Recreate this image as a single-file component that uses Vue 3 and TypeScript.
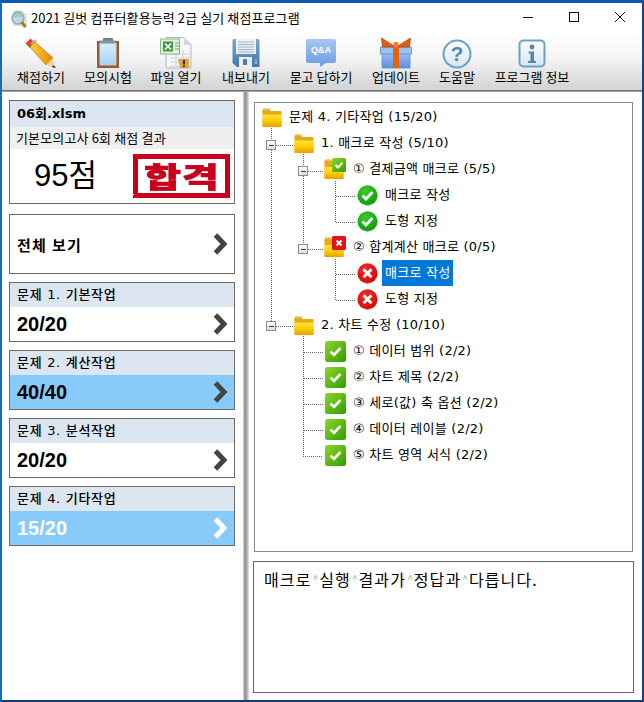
<script setup lang="ts">
interface Tool { label: string; icon: string; w: number }
interface Row { id: number; text: string; icon: string; indent: string; selected?: boolean }
interface Section { title: string; score: string; active?: boolean; light?: boolean }

const tools: Tool[] = [
  { label: '채점하기', icon: 'pencil', w: 68 },
  { label: '모의시험', icon: 'clip', w: 66 },
  { label: '파일 열기', icon: 'excel', w: 70 },
  { label: '내보내기', icon: 'floppy', w: 70 },
  { label: '묻고 답하기', icon: 'qa', w: 80 },
  { label: '업데이트', icon: 'gift', w: 70 },
  { label: '도움말', icon: 'help', w: 52 },
  { label: '프로그램 정보', icon: 'info', w: 98 },
]

const sections: Section[] = [
  { title: '문제 1. 기본작업', score: '20/20' },
  { title: '문제 2. 계산작업', score: '40/40', active: true },
  { title: '문제 3. 분석작업', score: '20/20' },
  { title: '문제 4. 기타작업', score: '15/20', active: true, light: true },
]

const rows: Row[] = [
  { id: 0, text: '문제 4. 기타작업 (15/20)', icon: 'folder', indent: 'l0' },
  { id: 1, text: '1. 매크로 작성 (5/10)', icon: 'folder', indent: 'l1' },
  { id: 2, text: '① 결제금액 매크로 (5/5)', icon: 'folder-ok', indent: 'l2' },
  { id: 3, text: '매크로 작성', icon: 'ok', indent: 'l3' },
  { id: 4, text: '도형 지정', icon: 'ok', indent: 'l3' },
  { id: 5, text: '② 합계계산 매크로 (0/5)', icon: 'folder-err', indent: 'l2' },
  { id: 6, text: '매크로 작성', icon: 'err', indent: 'l3', selected: true },
  { id: 7, text: '도형 지정', icon: 'err', indent: 'l3' },
  { id: 8, text: '2. 차트 수정 (10/10)', icon: 'folder', indent: 'l1' },
  { id: 9, text: '① 데이터 범위 (2/2)', icon: 'square', indent: 'l2b' },
  { id: 10, text: '② 차트 제목 (2/2)', icon: 'square', indent: 'l2b' },
  { id: 11, text: '③ 세로(값) 축 옵션 (2/2)', icon: 'square', indent: 'l2b' },
  { id: 12, text: '④ 데이터 레이블 (2/2)', icon: 'square', indent: 'l2b' },
  { id: 13, text: '⑤ 차트 영역 서식 (2/2)', icon: 'square', indent: 'l2b' },
]

const expanders: [number, number][] = [[271, 145], [303, 171], [303, 249], [271, 326]]
const lines: string[] = [
  'M271.5 128V326', 'M276 145.5H293',
  'M303.5 154V249', 'M308 171.5H323', 'M308 249.5H323',
  'M335.5 181V222.5H356', 'M336 196.5H356',
  'M335.5 259V300.5H356', 'M336 274.5H356',
  'M276 326.5H293',
  'M303.5 336V456.5H323', 'M304 352.5H323', 'M304 378.5H323', 'M304 404.5H323', 'M304 430.5H323',
]
const messageParts: string[] = ['매크로', '실행', '결과가', '정답과', '다릅니다.']
</script>

<template>
  <div class="window">
    <svg class="defs" width="0" height="0" aria-hidden="true">
      <defs>
        <linearGradient id="gFolder" x1="0" y1="0" x2="0" y2="1">
          <stop offset="0" stop-color="#ffe63a" />
          <stop offset="0.5" stop-color="#ffcf00" />
          <stop offset="1" stop-color="#e89e00" />
        </linearGradient>
        <linearGradient id="gFolderBack" x1="0" y1="0" x2="0" y2="1">
          <stop offset="0" stop-color="#fbd98a" />
          <stop offset="1" stop-color="#d48c10" />
        </linearGradient>
        <linearGradient id="gSquare" x1="0" y1="0" x2="1" y2="1">
          <stop offset="0" stop-color="#8fd62a" />
          <stop offset="1" stop-color="#2f9e00" />
        </linearGradient>
        <radialGradient id="gOk" cx="0.4" cy="0.3" r="0.8">
          <stop offset="0" stop-color="#3ccb2e" />
          <stop offset="1" stop-color="#049a04" />
        </radialGradient>
        <radialGradient id="gErr" cx="0.4" cy="0.3" r="0.8">
          <stop offset="0" stop-color="#f22a2a" />
          <stop offset="1" stop-color="#dc0000" />
        </radialGradient>
        <linearGradient id="gExp" x1="0" y1="0" x2="0" y2="1">
          <stop offset="0" stop-color="#ffffff" />
          <stop offset="1" stop-color="#d8dce4" />
        </linearGradient>
        <linearGradient id="gPencil" x1="0" y1="0" x2="1" y2="0">
          <stop offset="0" stop-color="#ffd23a" />
          <stop offset="1" stop-color="#e88a00" />
        </linearGradient>
        <linearGradient id="gPaper" x1="0" y1="0" x2="0" y2="1">
          <stop offset="0" stop-color="#d8ecfa" />
          <stop offset="1" stop-color="#a8d2f2" />
        </linearGradient>
        <linearGradient id="gFloppy" x1="0" y1="0" x2="0" y2="1">
          <stop offset="0" stop-color="#7fa8cc" />
          <stop offset="1" stop-color="#3f78ac" />
        </linearGradient>
        <linearGradient id="gQa" x1="0" y1="0" x2="0" y2="1">
          <stop offset="0" stop-color="#a8c8f4" />
          <stop offset="1" stop-color="#6a9be0" />
        </linearGradient>
        <linearGradient id="gGift" x1="0" y1="0" x2="0" y2="1">
          <stop offset="0" stop-color="#a4c8f4" />
          <stop offset="1" stop-color="#5a8edc" />
        </linearGradient>
        <linearGradient id="gHelp" x1="0" y1="0" x2="0" y2="1">
          <stop offset="0" stop-color="#ffffff" />
          <stop offset="1" stop-color="#d4e6f4" />
        </linearGradient>
        <filter id="rough" x="0" y="0" width="100%" height="100%">
          <feTurbulence type="fractalNoise" baseFrequency="0.55" numOctaves="2" seed="4" result="n" />
          <feDisplacementMap in="SourceGraphic" in2="n" scale="1.6" />
        </filter>
      </defs>
    </svg>

    <header class="titlebar">
      <svg class="app-icon" width="18" height="18" viewBox="0 0 18 18">
        <path d="M4 1h8l4 4v10H4z" fill="#eef2ea" stroke="#c8ccc4" />
        <circle cx="8" cy="8" r="6" fill="#bcd8ec" stroke="#8ea4b4" stroke-width="1.4" />
        <path d="M3 7a5 4 0 0 1 10 0z" fill="#9ec89a" opacity="0.7" />
        <path d="M11.5 12l4 5" stroke="#b07a24" stroke-width="3" />
      </svg>
      <span class="title-text">2021 길벗 컴퓨터활용능력 2급 실기 채점프로그램</span>
      <div class="controls">
        <svg width="46" height="30" viewBox="0 0 46 30"><path d="M18 14.5H28" stroke="#111" /></svg>
        <svg width="46" height="30" viewBox="0 0 46 30"><rect x="18.5" y="9.5" width="9" height="9" fill="none" stroke="#111" /></svg>
        <svg width="46" height="30" viewBox="0 0 46 30"><path d="M18 9L28 19M28 9L18 19" stroke="#111" /></svg>
      </div>
    </header>

    <nav class="toolbar">
      <div v-for="t in tools" :key="t.label" class="tool" :style="{ width: t.w + 'px' }">
        <svg width="32" height="32" viewBox="0 0 32 32">
          <g v-if="t.icon === 'pencil'">
            <path d="M5.5 1.5L0.5 6.5L5 11L10 6z" fill="#d9482a" />
            <path d="M5.5 6.5L10 2L12 4L7.5 8.5z" fill="#b8b8b8" />
            <path d="M10 5L5 10L21 28L28 21z" fill="url(#gPencil)" stroke="#a05c00" stroke-width="0.6" />
            <path d="M21 28L28 21L31 31z" fill="#f2d2a4" />
            <path d="M28.5 28.2L26.6 30L31 31z" fill="#333" />
          </g>
          <g v-else-if="t.icon === 'clip'">
            <rect x="5" y="4" width="22" height="27" fill="#9a5a2c" />
            <rect x="7.5" y="6" width="17" height="22.5" fill="url(#gPaper)" />
            <rect x="11" y="1" width="10" height="5" rx="1" fill="#6f8288" />
            <rect x="8" y="3.5" width="16" height="3" fill="#84969c" />
          </g>
          <g v-else-if="t.icon === 'excel'">
            <path d="M6 0.5H24L31 8V31H6z" fill="#f4f6f8" stroke="#b4b8bc" />
            <path d="M24 0.5V8H31z" fill="#d4d8dc" />
            <path d="M10 17H30M10 21H30M10 25H30M10 29H30M16 13V31M23 13V31" stroke="#c4ccd0" stroke-width="0.8" />
            <rect x="0.5" y="2" width="19" height="15" fill="#e4f2dc" stroke="#8ab87c" />
            <rect x="3" y="4.5" width="10" height="10" fill="#3f9a48" />
            <path d="M5 6.5L11 12.5M11 6.5L5 12.5" stroke="#fff" stroke-width="1.6" />
            <path d="M15 6H19M15 9H19M15 12H19" stroke="#6aa860" />
            <path d="M18 22H29V31H20z" fill="#d8a848" />
            <rect x="23" y="23" width="2" height="4.5" fill="#3a2a10" />
            <rect x="23" y="28.5" width="2" height="1.6" fill="#3a2a10" />
          </g>
          <g v-else-if="t.icon === 'floppy'">
            <path d="M2.5 3.5a1.5 1.5 0 0 1 1.5-1.5H28a1.5 1.5 0 0 1 1.5 1.5V30H7L2.5 26z" fill="url(#gFloppy)" />
            <rect x="6" y="2" width="20" height="15" fill="#eef2f6" />
            <path d="M8 5H24M8 7.5H24M8 10H24M8 12.5H24M8 15H24" stroke="#9cb0c4" />
            <rect x="9" y="20" width="13" height="10" fill="#e8eef4" />
            <rect x="13" y="22" width="4" height="6" fill="#4a7eae" />
            <path d="M26 22V27M24.5 25.5L26 27L27.5 25.5" stroke="#a8c4dc" fill="none" />
          </g>
          <g v-else-if="t.icon === 'qa'">
            <path d="M1 4a2 2 0 0 1 2-2H29a2 2 0 0 1 2 2V24a2 2 0 0 1-2 2H21L15 30V26H3a2 2 0 0 1-2-2z" fill="url(#gQa)" />
            <text x="16" y="16" text-anchor="middle" class="qa-text">Q&amp;A</text>
          </g>
          <g v-else-if="t.icon === 'gift'">
            <rect x="2" y="14" width="28" height="17" fill="url(#gGift)" stroke="#6a92c8" stroke-width="0.8" />
            <rect x="0.5" y="10" width="31" height="7" fill="#9cc0f0" stroke="#5f8cd0" stroke-width="0.8" />
            <rect x="13" y="10" width="6" height="21" fill="#e8620e" />
            <path d="M15.5 10L1.5 1L2.5 10zM16.5 10L30.5 1L29.5 10z" fill="#e35c10" stroke="#a83c00" stroke-width="0.7" />
            <rect x="13.5" y="5" width="5" height="5.5" rx="1.4" fill="#f08030" />
          </g>
          <g v-else-if="t.icon === 'help'">
            <circle cx="16" cy="17" r="13.5" fill="url(#gHelp)" stroke="#6ca0c8" stroke-width="2" />
            <text x="16" y="24" text-anchor="middle" class="help-text">?</text>
          </g>
          <g v-else>
            <rect x="3.5" y="3.5" width="25" height="26" rx="4" fill="url(#gHelp)" stroke="#6ca0c8" stroke-width="2" />
            <circle cx="16" cy="10" r="2.4" fill="#4f86aa" />
            <path d="M12.5 14.5H18V24H20V26H12V24H14.5V16.5H12.5z" fill="#4f86aa" />
          </g>
        </svg>
        <span class="tool-label">{{ t.label }}</span>
      </div>
    </nav>
    <div class="toolbar-edge"></div>

    <main class="content">
      <aside class="left">
        <section class="card">
          <div class="file-name">06회.xlsm</div>
          <div class="sub-title">기본모의고사 6회 채점 결과</div>
          <div class="score-row">
            <span class="total">95점</span>
            <div class="stamp"><span>합격</span></div>
          </div>
        </section>

        <button class="card all-view" type="button">
          <span>전체 보기</span>
          <svg class="chev" width="16" height="24" viewBox="0 0 16 24"><path d="M2.5 3L11 12L2.5 21" fill="none" stroke="#444" stroke-width="5" /></svg>
        </button>

        <section v-for="s in sections" :key="s.title" class="card sect">
          <div class="sect-title">{{ s.title }}</div>
          <div class="sect-body" :class="{ active: s.active, light: s.light }">
            <span>{{ s.score }}</span>
            <svg class="chev" width="16" height="24" viewBox="0 0 16 24"><path d="M2.5 3L11 12L2.5 21" fill="none" :stroke="s.light ? '#fff' : '#444'" stroke-width="5" /></svg>
          </div>
        </section>
      </aside>

      <div class="splitter"></div>

      <div class="right">
        <div class="tree">
          <svg class="guides" width="377" height="448" viewBox="255 103 377 448">
            <path v-for="d in lines" :key="d" :d="d" fill="none" stroke="#666" stroke-dasharray="1 1" shape-rendering="crispEdges" />
            <g v-for="e in expanders" :key="e[1]">
              <rect :x="e[0] - 4.5" :y="e[1] - 4.5" width="9" height="9" fill="url(#gExp)" stroke="#8c8c8c" shape-rendering="crispEdges" />
              <path :d="`M${e[0] - 2} ${e[1] + 0.5}H${e[0] + 3}`" stroke="#2038b0" shape-rendering="crispEdges" />
            </g>
          </svg>
          <div v-for="r in rows" :key="r.id" class="row" :class="r.indent">
            <svg v-if="r.icon === 'folder'" width="20" height="21" viewBox="0 0 20 21">
              <path d="M0.5 3a2 2 0 0 1 2-2H6a2 2 0 0 1 2 2v2H0.5z" fill="url(#gFolderBack)" />
              <path d="M0.5 4H18.5a1 1 0 0 1 1 1V19a1 1 0 0 1-1 1H1.5a1 1 0 0 1-1-1z" fill="#e8a818" />
              <path d="M0.5 7.5H19.5V19a1 1 0 0 1-1 1H1.5a1 1 0 0 1-1-1z" fill="url(#gFolder)" />
            </svg>
            <svg v-else-if="r.icon === 'folder-ok' || r.icon === 'folder-err'" width="22" height="22" viewBox="0 0 22 22">
              <path d="M0.5 3a2 2 0 0 1 2-2H6a2 2 0 0 1 2 2v2H0.5z" fill="url(#gFolderBack)" />
              <path d="M0.5 4H18.5a1 1 0 0 1 1 1V20a1 1 0 0 1-1 1H1.5a1 1 0 0 1-1-1z" fill="#e8a818" />
              <path d="M0.5 9H19.5V20a1 1 0 0 1-1 1H1.5a1 1 0 0 1-1-1z" fill="url(#gFolder)" />
              <rect x="8" y="0" width="14" height="14" rx="1.5" :fill="r.icon === 'folder-ok' ? 'url(#gSquare)' : '#e01414'" />
              <path v-if="r.icon === 'folder-ok'" d="M11.5 7L14 9.5L18.5 4.8" fill="none" stroke="#fff" stroke-width="2" />
              <path v-else d="M12.5 4.5L17.5 9.5M17.5 4.5L12.5 9.5" stroke="#fff" stroke-width="2" />
            </svg>
            <svg v-else-if="r.icon === 'ok'" width="21" height="21" viewBox="0 0 21 21">
              <circle cx="10.5" cy="11" r="10" fill="#8a8f8a" opacity="0.5" />
              <circle cx="10.5" cy="10.3" r="10" fill="url(#gOk)" />
              <path d="M5.5 10.5L9 14L15.5 7" fill="none" stroke="#fff" stroke-width="2.8" />
            </svg>
            <svg v-else-if="r.icon === 'err'" width="21" height="21" viewBox="0 0 21 21">
              <circle cx="10.5" cy="11" r="10" fill="#8a6f6f" opacity="0.5" />
              <circle cx="10.5" cy="10.3" r="10" fill="url(#gErr)" />
              <path d="M6.5 6.3L14.5 14.3M14.5 6.3L6.5 14.3" stroke="#fff" stroke-width="3" />
            </svg>
            <svg v-else width="21" height="21" viewBox="0 0 21 21">
              <rect x="0" y="0" width="21" height="21" rx="2.5" fill="url(#gSquare)" />
              <path d="M5.5 10.5L9 14L15.5 7" fill="none" stroke="#fff" stroke-width="2.6" />
            </svg>
            <span class="row-text" :class="{ selected: r.selected, leaf: r.indent === 'l3' }">{{ r.text }}</span>
          </div>
        </div>

        <div class="message">
          <template v-for="(p, i) in messageParts" :key="p">
            <span v-if="i > 0" class="caret">^</span>{{ p }}
          </template>
        </div>
      </div>
    </main>
  </div>
</template>

<style>
html, body { margin: 0; padding: 0; overflow: hidden; }
</style>

<style scoped>
.window {
  width: 644px;
  height: 702px;
  box-sizing: border-box;
  border-top: 3px solid #0b5cae;
  border-left: 2px solid #0a70c0;
  border-right: 2px solid #1c3f88;
  border-bottom: 2px solid #163a78;
  display: flex;
  flex-direction: column;
  background: #fff;
  color: #000;
  font-family: "Noto Sans CJK KR", "Liberation Sans", sans-serif;
  font-size: 13px;
  position: relative;
  overflow: hidden;
}
.defs { position: absolute; }
.titlebar {
  height: 30px;
  flex: none;
  display: flex;
  align-items: center;
  padding-left: 8px;
}
.app-icon { flex: none; margin-top: 1px; }
.title-text { margin-left: 3px; font-size: 13px; line-height: 30px; letter-spacing: 0.1px; white-space: nowrap; flex: 1; }
.controls { display: flex; margin-right: -1px; }
.controls svg { display: block; }
.toolbar {
  height: 57px;
  flex: none;
  box-sizing: border-box;
  display: flex;
  padding: 4px 0 0 5px;
  background: linear-gradient(#ffffff, #f4f4f4 45%, #d2d2d2);
}
.tool {
  flex: none;
  display: flex;
  flex-direction: column;
  align-items: center;
}
.tool svg { display: block; }
.tool-label { font-size: 13px; line-height: 16px; margin-top: 0; white-space: nowrap; }
.toolbar-edge {
  height: 2px;
  flex: none;
  background: linear-gradient(#5c5c5c, #b8b8b8);
}
.qa-text { font: bold 9px "Liberation Sans", sans-serif; fill: #fff; }
.help-text { font: bold 21px "Liberation Sans", sans-serif; fill: #4f8ab8; }
.content { flex: 1; display: flex; min-height: 0; }
.left {
  width: 241px;
  flex: none;
  box-sizing: border-box;
  padding: 8px 0 0 7px;
  display: flex;
  flex-direction: column;
  gap: 8px;
}
.card {
  width: 226px;
  box-sizing: border-box;
  border: 1px solid #6a6a6a;
  background: #fff;
  flex: none;
}
.card:first-child { height: 104px; margin-bottom: 2px; }
.file-name {
  height: 26px;
  line-height: 25px;
  background: #dce6f0;
  padding-left: 7px;
  font-family: "DejaVu Sans", "Noto Sans CJK KR", sans-serif;
  font-weight: 700;
  font-size: 13px;
}
.sub-title {
  height: 22px;
  line-height: 21px;
  background: #efefef;
  padding-left: 6px;
  font-size: 13px;
  letter-spacing: 0.15px;
  white-space: nowrap;
}
.score-row {
  height: 54px;
  display: flex;
  align-items: center;
  justify-content: space-between;
  padding: 0 4px 0 24px;
}
.total {
  font-family: "Liberation Sans", "Noto Sans CJK KR", sans-serif;
  font-size: 31px;
  line-height: 40px;
  white-space: nowrap;
}
.stamp {
  width: 97px;
  height: 44px;
  box-sizing: border-box;
  border: 5px solid #c8051f;
  color: #c8051f;
  display: flex;
  align-items: center;
  justify-content: center;
  filter: url(#rough);
  margin-top: -1px;
}
.stamp span {
  font-weight: 900;
  font-size: 40px;
  line-height: 34px;
  letter-spacing: 1px;
  margin-right: -1px;
  -webkit-text-stroke: 1px #c8051f;
  transform: scaleY(0.72);
}
.all-view {
  height: 60px;
  padding: 0 5px 0 7px;
  font: inherit;
  font-size: 15px;
  font-weight: 700;
  letter-spacing: 1.3px;
  display: flex;
  align-items: center;
  justify-content: space-between;
  color: #000;
}
.chev { display: block; flex: none; }
.sect { height: 60px; display: flex; flex-direction: column; }
.sect-title {
  height: 24px;
  line-height: 23px;
  background: #dce6f0;
  padding-left: 7px;
  font-family: "DejaVu Sans", "Noto Sans CJK KR", sans-serif;
  font-size: 13px;
  font-weight: 500;
  letter-spacing: 0.7px;
  flex: none;
}
.sect-body {
  flex: 1;
  display: flex;
  align-items: center;
  justify-content: space-between;
  padding: 0 5px 0 7px;
  font-family: "Liberation Sans", sans-serif;
  font-size: 20px;
  font-weight: 700;
}
.sect-body.active { background: #87cbfa; }
.sect-body.light { color: #fff; }
.splitter {
  width: 6px;
  flex: none;
  background: linear-gradient(90deg, #dcdcdc, #8c8c8c 35%, #a8a8a8 60%, #e4e4e4);
}
.right {
  flex: 1;
  min-width: 0;
  display: flex;
  flex-direction: column;
  padding: 10px 8px 7px 4px;
}
.tree {
  position: relative;
  height: 450px;
  flex: none;
  box-sizing: border-box;
  margin: 0 1px 0 1px;
  border: 1px solid #868a92;
  padding-top: 1px;
}
.guides { position: absolute; left: 0; top: 0; display: block; }
.row {
  position: relative;
  height: 26px;
  display: flex;
  align-items: center;
  white-space: nowrap;
}
.row svg { display: block; flex: none; }
.l0 { padding-left: 7px; }
.l1 { padding-left: 39px; }
.l2 { padding-left: 69px; }
.l2b { padding-left: 70px; }
.l3 { padding-left: 102px; }
.row-text {
  margin-left: 7px;
  height: 26px;
  line-height: 26px;
  font-family: "DejaVu Sans", "Noto Sans CJK KR", sans-serif;
  font-size: 13px;
  letter-spacing: 0.25px;
}
.row-text.leaf { margin-left: 4px; padding: 0 3px; }
.row-text.selected { background: #0078d7; color: #fff; }
.message {
  margin-top: 9px;
  flex: 1;
  border: 1px solid #666;
  padding: 6px 10px;
  font-size: 16px;
  line-height: 22px;
  letter-spacing: 1.15px;
  white-space: nowrap;
}
.caret { color: #7fb08a; font-size: 10px; letter-spacing: 0; vertical-align: 3px; margin: 0 1px; }
</style>
